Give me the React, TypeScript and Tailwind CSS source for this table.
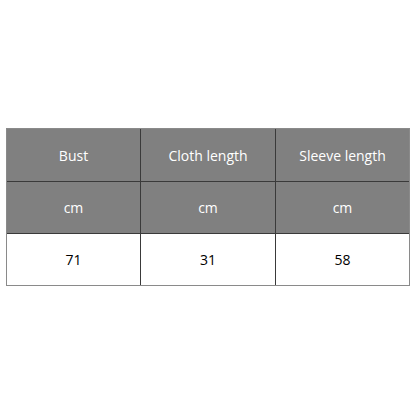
export default function App() {
  const headers = ['Bust', 'Cloth length', 'Sleeve length']
  const units = ['cm', 'cm', 'cm']
  const values = ['71', '31', '58']

  return (
    <div
      className="w-[416px] h-[416px] bg-white flex items-start pt-[128px] pl-[6px]"
      style={{ fontFamily: '"Open Sans", "Noto Sans", sans-serif' }}
    >
      <div className="w-[404px] border border-[#8a8a8a] grid grid-cols-[134px_135px_1fr]">
        {headers.map((h, i) => (
          <div
            key={h}
            className={`h-[53px] bg-[#808080] text-white text-[14px] flex items-center justify-center border-b border-[#3a3a3a] ${i < 2 ? 'border-r' : ''}`}
          >
            {h}
          </div>
        ))}
        {units.map((u, i) => (
          <div
            key={'u' + i}
            className={`h-[52px] bg-[#808080] text-white text-[14px] flex items-center justify-center border-b border-[#3a3a3a] ${i < 2 ? 'border-r' : ''}`}
          >
            {u}
          </div>
        ))}
        {values.map((v, i) => (
          <div
            key={'v' + i}
            className={`h-[51px] bg-white text-black text-[14px] flex items-center justify-center border-[#3a3a3a] ${i < 2 ? 'border-r' : ''}`}
          >
            {v}
          </div>
        ))}
      </div>
    </div>
  )
}
